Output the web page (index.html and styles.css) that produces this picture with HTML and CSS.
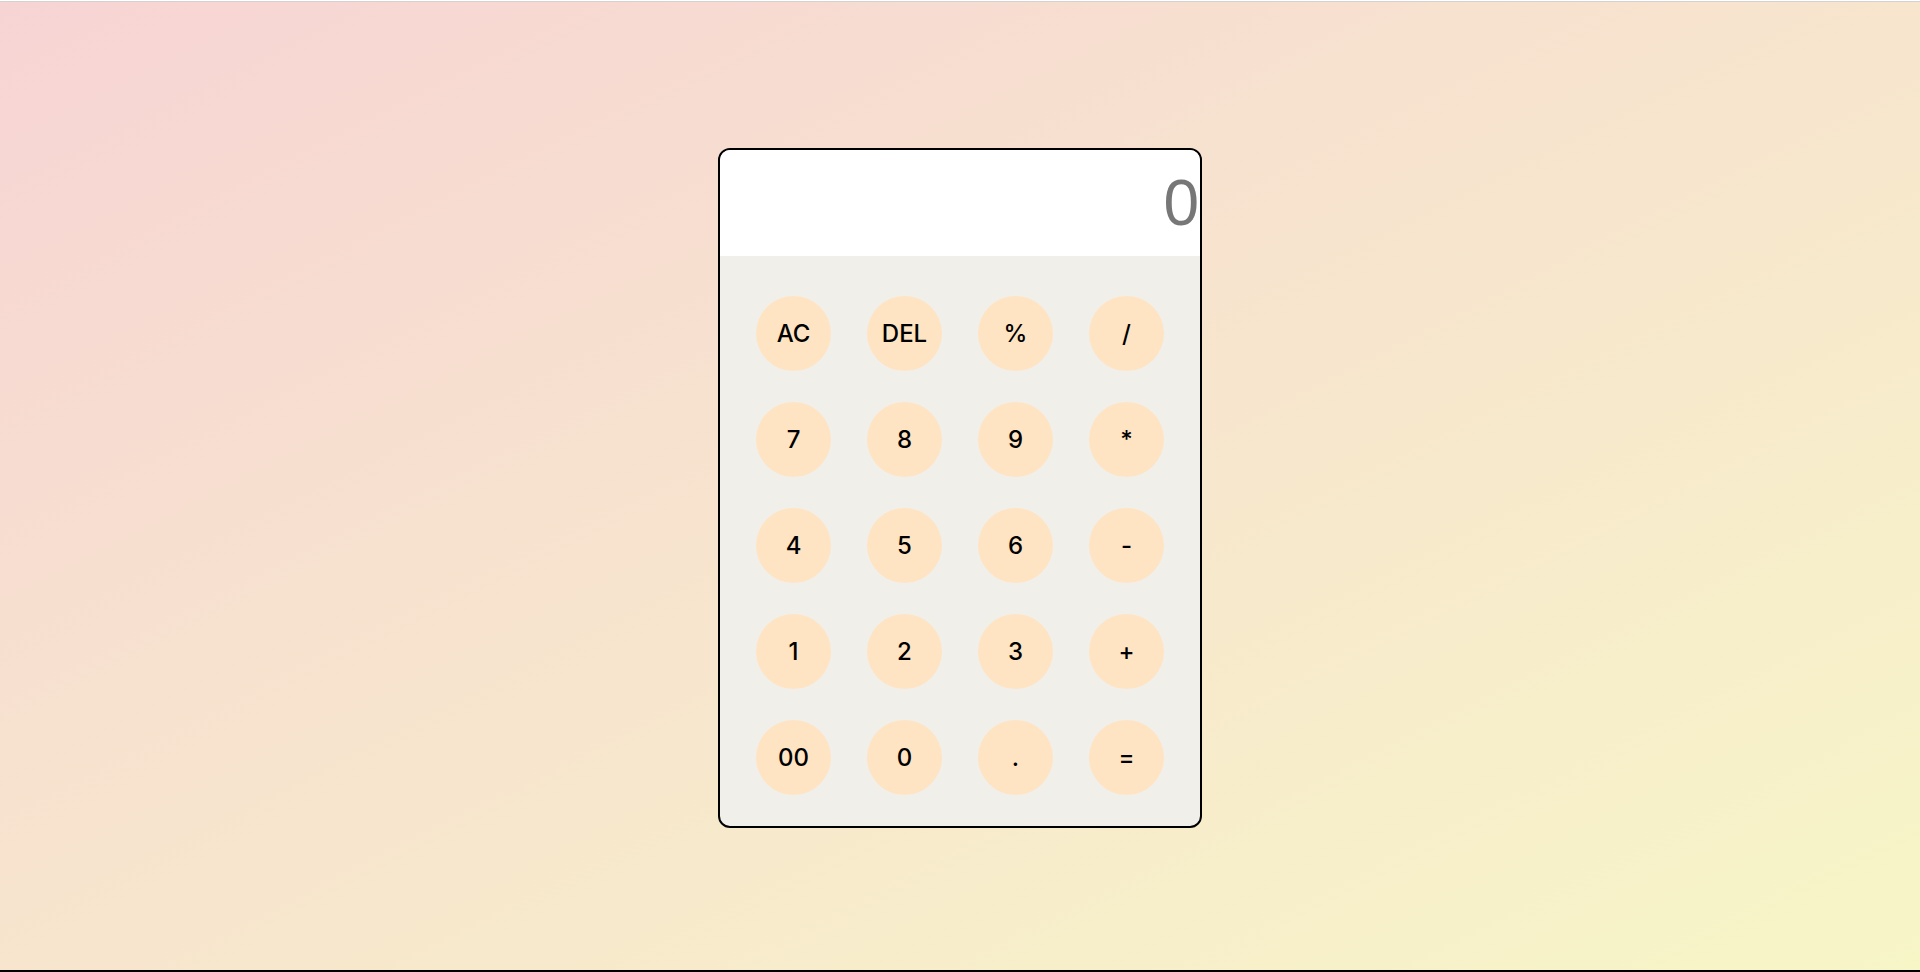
FILE: index.html
```html
<!DOCTYPE html>
<html lang="en">
<head>
<meta charset="utf-8">
<title>Calculator</title>
<link rel="stylesheet" href="styles.css">
</head>
<body>
<div class="page">
  <div class="calculator">
    <div class="display"><span class="value">0</span></div>
    <div class="keypad">
      <button class="key">AC</button>
      <button class="key">DEL</button>
      <button class="key">%</button>
      <button class="key">/</button>
      <button class="key">7</button>
      <button class="key">8</button>
      <button class="key">9</button>
      <button class="key">*</button>
      <button class="key">4</button>
      <button class="key">5</button>
      <button class="key">6</button>
      <button class="key">-</button>
      <button class="key">1</button>
      <button class="key">2</button>
      <button class="key">3</button>
      <button class="key">+</button>
      <button class="key">00</button>
      <button class="key">0</button>
      <button class="key">.</button>
      <button class="key">=</button>
    </div>
  </div>
</div>
</body>
</html>
```
FILE: styles.css
```css
html, body {
  margin: 0;
  padding: 0;
  background: #ffffff;
}
body {
  padding-top: 1px;
}
.page {
  box-sizing: border-box;
  height: 971px;
  border-top: 1px solid #d2d2d2;
  border-bottom: 2px solid #000;
  background: linear-gradient(to bottom right, #f7d4d4, #f7f6c7);
  display: flex;
  align-items: center;
  justify-content: center;
  padding-top: 4px;
}
.calculator {
  width: 480px;
  border: 2px solid #000;
  border-radius: 12px;
  overflow: hidden;
  background: #f1efea;
}
.display {
  height: 106px;
  background: #fff;
  display: flex;
  align-items: center;
  justify-content: flex-end;
}
.value {
  font-family: "Liberation Sans", Arial, sans-serif;
  font-size: 64px;
  color: #777;
  padding-right: 1px;
}
.keypad {
  display: grid;
  grid-template-columns: repeat(4, 75px);
  grid-auto-rows: 75px;
  column-gap: 36px;
  row-gap: 31px;
  padding: 40px 36px 31px;
}
.key {
  width: 75px;
  height: 75px;
  border: none;
  border-radius: 50%;
  background: #ffe4c4;
  font-family: Inter, "Noto Sans", sans-serif;
  font-weight: 500;
  font-size: 24px;
  color: #000;
  padding: 0;
  display: flex;
  align-items: center;
  justify-content: center;
}
```
